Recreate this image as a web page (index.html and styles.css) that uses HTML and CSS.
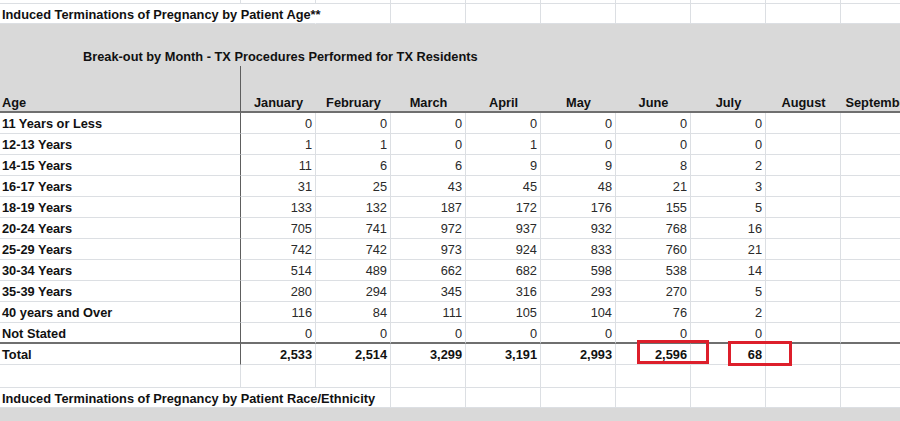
FILE: index.html
```html
<!DOCTYPE html>
<html>
<head>
<meta charset="utf-8">
<link rel="stylesheet" href="styles.css">
</head>
<body>
<table class="sheet">
  <colgroup>
    <col class="c-age">
    <col class="c-m"><col class="c-m"><col class="c-m"><col class="c-m"><col class="c-m">
    <col class="c-m"><col class="c-m"><col class="c-m"><col class="c-m">
  </colgroup>
  <tbody>
    <tr class="r-top"><td class="lbl-sep"></td><td></td><td></td><td></td><td></td><td></td><td></td><td></td><td></td><td></td></tr>
    <tr class="r-title"><td class="title" colspan="2">Induced Terminations of Pregnancy by Patient Age**</td><td></td><td></td><td></td><td></td><td></td><td></td><td></td><td></td></tr>
    <tr class="r-gray"><td colspan="10"></td></tr>
    <tr class="r-gray"><td class="subtitle" colspan="10"><span>Break-out by Month - TX Procedures Performed for TX Residents</span></td></tr>
    <tr class="r-head">
      <td class="h-age lbl">Age</td>
      <td>January</td><td>February</td><td>March</td><td>April</td><td>May</td><td>June</td><td>July</td><td>August</td><td>September</td>
    </tr>
    <tr class="r-data"><td class="lbl">11 Years or Less</td><td>0</td><td>0</td><td>0</td><td>0</td><td>0</td><td>0</td><td>0</td><td></td><td></td></tr>
    <tr class="r-data"><td class="lbl">12-13 Years</td><td>1</td><td>1</td><td>0</td><td>1</td><td>0</td><td>0</td><td>0</td><td></td><td></td></tr>
    <tr class="r-data"><td class="lbl">14-15 Years</td><td>11</td><td>6</td><td>6</td><td>9</td><td>9</td><td>8</td><td>2</td><td></td><td></td></tr>
    <tr class="r-data"><td class="lbl">16-17 Years</td><td>31</td><td>25</td><td>43</td><td>45</td><td>48</td><td>21</td><td>3</td><td></td><td></td></tr>
    <tr class="r-data"><td class="lbl">18-19 Years</td><td>133</td><td>132</td><td>187</td><td>172</td><td>176</td><td>155</td><td>5</td><td></td><td></td></tr>
    <tr class="r-data"><td class="lbl">20-24 Years</td><td>705</td><td>741</td><td>972</td><td>937</td><td>932</td><td>768</td><td>16</td><td></td><td></td></tr>
    <tr class="r-data"><td class="lbl">25-29 Years</td><td>742</td><td>742</td><td>973</td><td>924</td><td>833</td><td>760</td><td>21</td><td></td><td></td></tr>
    <tr class="r-data"><td class="lbl">30-34 Years</td><td>514</td><td>489</td><td>662</td><td>682</td><td>598</td><td>538</td><td>14</td><td></td><td></td></tr>
    <tr class="r-data"><td class="lbl">35-39 Years</td><td>280</td><td>294</td><td>345</td><td>316</td><td>293</td><td>270</td><td>5</td><td></td><td></td></tr>
    <tr class="r-data"><td class="lbl">40 years and Over</td><td>116</td><td>84</td><td>111</td><td>105</td><td>104</td><td>76</td><td>2</td><td></td><td></td></tr>
    <tr class="r-data r-last"><td class="lbl">Not Stated</td><td>0</td><td>0</td><td>0</td><td>0</td><td>0</td><td>0</td><td>0</td><td></td><td></td></tr>
    <tr class="r-data r-total"><td class="lbl">Total</td><td>2,533</td><td>2,514</td><td>3,299</td><td>3,191</td><td>2,993</td><td class="hl">2,596<span class="mark mark-june"></span></td><td class="hl">68<span class="mark mark-july"></span></td><td></td><td></td></tr>
    <tr class="r-blank"><td class="lbl-sep"></td><td></td><td></td><td></td><td></td><td></td><td></td><td></td><td></td><td></td></tr>
    <tr class="r-title"><td class="title" colspan="2">Induced Terminations of Pregnancy by Patient Race/Ethnicity</td><td></td><td></td><td></td><td></td><td></td><td></td><td></td><td></td></tr>
    <tr class="r-gray r-foot"><td colspan="10"></td></tr>
  </tbody>
</table>
</body>
</html>
```

FILE: styles.css
```css
html, body {
  margin: 0;
  padding: 0;
  background: #ffffff;
  overflow: hidden;
}

body {
  width: 900px;
  height: 421px;
  font-family: "Liberation Sans", Arial, sans-serif;
  font-size: 12.8px;
  color: #222222;
}

.sheet {
  border-collapse: separate;
  border-spacing: 0;
  table-layout: fixed;
  width: 916px;
}

.c-age { width: 241px; }
.c-m { width: 75px; }

.sheet td {
  box-sizing: border-box;
  padding: 0 3px;
  white-space: nowrap;
  overflow: visible;
  border-right: 1px solid #dcdfe3;
  border-bottom: 1px solid #dcdfe3;
  line-height: 14px;
  vertical-align: middle;
}

.r-top td { height: 4px; padding: 0; }

.r-title td { height: 20px; }
.r-title .title {
  font-weight: bold;
  color: #111111;
  padding-left: 2px;
  padding-top: 2px;
  border-right-color: transparent;
  position: relative;
  z-index: 1;
}

.r-gray td {
  background: #d9d9d9;
  border: 0;
  height: 21px;
}
.r-gray .subtitle {
  font-weight: bold;
  color: #111111;
  padding-left: 83px;
  padding-top: 2px;
}
.r-foot td { height: 14px; }

.r-head td {
  background: #d9d9d9;
  border-right: 0;
  border-bottom: 2px solid #6f6f6f;
  height: 47px;
  vertical-align: bottom;
  padding-bottom: 1px;
  text-align: center;
  font-weight: bold;
  color: #111111;
}
.r-head td.h-age {
  text-align: left;
  padding-left: 2px;
  border-right: 1px solid #5e5e5e;
}

.r-data td {
  height: 21px;
  text-align: right;
  padding-top: 2px;
  color: #2a2a2a;
}
.r-data td.lbl {
  text-align: left;
  padding-left: 2px;
  font-weight: bold;
  color: #111111;
  border-right: 1px solid #5e5e5e;
}

.r-last td { border-bottom: 2px solid #6f6f6f; }

.r-total td {
  font-weight: bold;
  color: #111111;
}

.r-blank td { height: 23px; }

.hl { position: relative; }

.mark {
  position: absolute;
  border: 3px solid #dd1f2b;
  box-sizing: border-box;
}
.mark-june {
  left: 21px;
  top: -4px;
  width: 72px;
  height: 24px;
}
.mark-july {
  left: 37px;
  top: -3px;
  width: 64px;
  height: 25px;
}
```
